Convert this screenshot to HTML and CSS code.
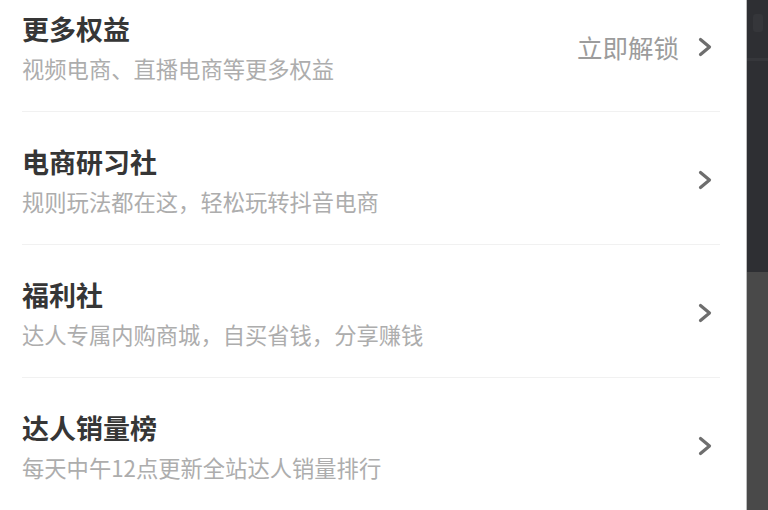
FILE: index.html
```html
<!DOCTYPE html>
<html lang="zh-CN">
<head>
<meta charset="utf-8">
<link rel="stylesheet" href="styles.css">
</head>
<body>
<div class="screen">
  <main class="list">
    <div class="row first">
      <div class="text">
        <div class="title">更多权益</div>
        <div class="sub">视频电商、直播电商等更多权益</div>
      </div>
      <div class="right">
        <span class="action">立即解锁</span>
        <svg class="chev" viewBox="0 0 16 20" width="16" height="20"><path d="M3.5 2.5 L12.5 10 L3.5 17.5" fill="none" stroke="#6e6e6e" stroke-width="3.2" stroke-linecap="round" stroke-linejoin="round"/></svg>
      </div>
    </div>
    <div class="row">
      <div class="text">
        <div class="title">电商研习社</div>
        <div class="sub">规则玩法都在这，轻松玩转抖音电商</div>
      </div>
      <div class="right">
        <svg class="chev" viewBox="0 0 16 20" width="16" height="20"><path d="M3.5 2.5 L12.5 10 L3.5 17.5" fill="none" stroke="#6e6e6e" stroke-width="3.2" stroke-linecap="round" stroke-linejoin="round"/></svg>
      </div>
    </div>
    <div class="row">
      <div class="text">
        <div class="title">福利社</div>
        <div class="sub">达人专属内购商城，自买省钱，分享赚钱</div>
      </div>
      <div class="right">
        <svg class="chev" viewBox="0 0 16 20" width="16" height="20"><path d="M3.5 2.5 L12.5 10 L3.5 17.5" fill="none" stroke="#6e6e6e" stroke-width="3.2" stroke-linecap="round" stroke-linejoin="round"/></svg>
      </div>
    </div>
    <div class="row">
      <div class="text">
        <div class="title">达人销量榜</div>
        <div class="sub">每天中午12点更新全站达人销量排行</div>
      </div>
      <div class="right">
        <svg class="chev" viewBox="0 0 16 20" width="16" height="20"><path d="M3.5 2.5 L12.5 10 L3.5 17.5" fill="none" stroke="#6e6e6e" stroke-width="3.2" stroke-linecap="round" stroke-linejoin="round"/></svg>
      </div>
    </div>
  </main>
  <div class="edge"></div>
  <aside class="side">
    <div class="side-top">
      <div class="side-icon"></div>
      <div class="side-line"></div>
    </div>
    <div class="side-bottom"></div>
  </aside>
</div>
</body>
</html>
```

FILE: styles.css
```css
html, body {
  margin: 0;
  padding: 0;
  background: #ffffff;
}
body {
  font-family: "Noto Sans CJK SC", "Noto Sans", sans-serif;
  width: 768px;
  height: 510px;
  overflow: hidden;
}
.screen {
  display: flex;
  width: 768px;
  height: 510px;
}
.list {
  width: 746px;
  box-sizing: border-box;
  padding: 0 26px 0 22px;
  display: flex;
  flex-direction: column;
  background: #fff;
}
.row {
  display: flex;
  align-items: center;
  justify-content: space-between;
  padding: 32px 0 28px 0;
  border-bottom: 1px solid #f1f1f1;
  flex: none;
}
.row.first {
  padding-top: 11px;
}
.text {
  display: flex;
  flex-direction: column;
  gap: 6px;
}
.title {
  font-size: 27px;
  line-height: 36px;
  font-weight: 700;
  color: #363636;
}
.sub {
  font-size: 22.3px;
  line-height: 30px;
  color: #adadad;
}
.right {
  display: flex;
  align-items: center;
  gap: 18px;
  margin-right: 7px;
}
.action {
  font-size: 25.5px;
  line-height: 30px;
  color: #9c9c9c;
}
.chev {
  display: block;
}
.edge {
  width: 1px;
  background: #bdbdbd;
  flex: none;
}
.side {
  flex: 1;
  display: flex;
  flex-direction: column;
}
.side-top {
  height: 272px;
  background: #2e2f33;
  display: flex;
  flex-direction: column;
  align-items: center;
  padding-top: 14px;
  box-sizing: border-box;
}
.side-icon {
  width: 10px;
  height: 18px;
  border-radius: 3px;
  background: #35363a;
}
.side-line {
  margin-top: 26px;
  width: 100%;
  height: 3px;
  background: #36373b;
}
.side-bottom {
  flex: 1;
  background: #494949;
}
```
